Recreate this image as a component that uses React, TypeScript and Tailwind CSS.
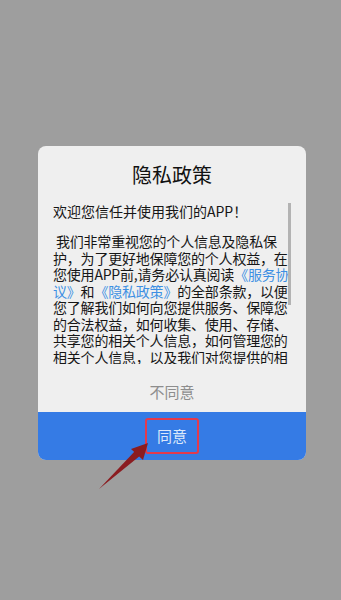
import React from "react";

const font = { fontFamily: '"Noto Sans CJK SC", "Noto Sans", sans-serif' };

const Link = ({ children }: { children: React.ReactNode }) => (
  <span className="text-[#3d8fe3]">{children}</span>
);

export default function App() {
  const lines: React.ReactNode[] = [
    "\u00a0我们非常重视您的个人信息及隐私保",
    "护，为了更好地保障您的个人权益，在",
    <>
      您使用APP前,请务必认真阅读<Link>《服务协</Link>
    </>,
    <>
      <Link>议》</Link>和<Link>《隐私政策》</Link>的全部条款，以便
    </>,
    "您了解我们如何向您提供服务、保障您",
    "的合法权益，如何收集、使用、存储、",
    "共享您的相关个人信息，如何管理您的",
    "相关个人信息，以及我们对您提供的相",
  ];

  return (
    <div className="relative h-[600px] w-[341px] overflow-hidden bg-[#9e9e9e] pt-[146px]" style={font}>
      <div className="relative ml-[38px] w-[268px] overflow-hidden rounded-[8px] bg-[#efefef]">
        {/* title */}
        <div className="pt-[15px] text-center text-[20px] leading-[28px] text-[#111]">隐私政策</div>

        {/* body */}
        <div className="relative mt-[14px] h-[161px] overflow-hidden pl-[15px] text-[14px] leading-[16.5px] text-[#161616]">
          <div className="whitespace-nowrap">欢迎您信任并使用我们的APP！</div>
          <div className="h-[13.5px]" />
          {lines.map((l, i) => (
            <div key={i} className="whitespace-nowrap tracking-[-0.2px]">
              {l}
            </div>
          ))}
          {/* scroll indicator */}
          <div className="absolute left-[250px] top-[-5px] h-[107px] w-[3px] bg-[#b3b3b3]" />
        </div>

        {/* disagree */}
        <div className="flex h-[48px] items-center justify-center pt-[8px] text-[15px] text-[#8d8d8d]">不同意</div>

        {/* agree */}
        <div className="flex h-[48px] items-center justify-center bg-[#357be5]">
          <div className="flex h-[36px] w-[54px] items-center justify-center rounded-[3px] border-2 border-[#e33a4d] text-[15px] text-[#dce8fb]">
            同意
          </div>
        </div>
      </div>

      {/* annotation arrow */}
      <svg className="absolute left-0 top-0" width="341" height="600" viewBox="0 0 341 600">
        <polygon points="99,489 136,450 141,455" fill="#8b1c20" />
        <polygon points="148,443 131,449 143,460" fill="#8b1c20" />
      </svg>
    </div>
  );
}
